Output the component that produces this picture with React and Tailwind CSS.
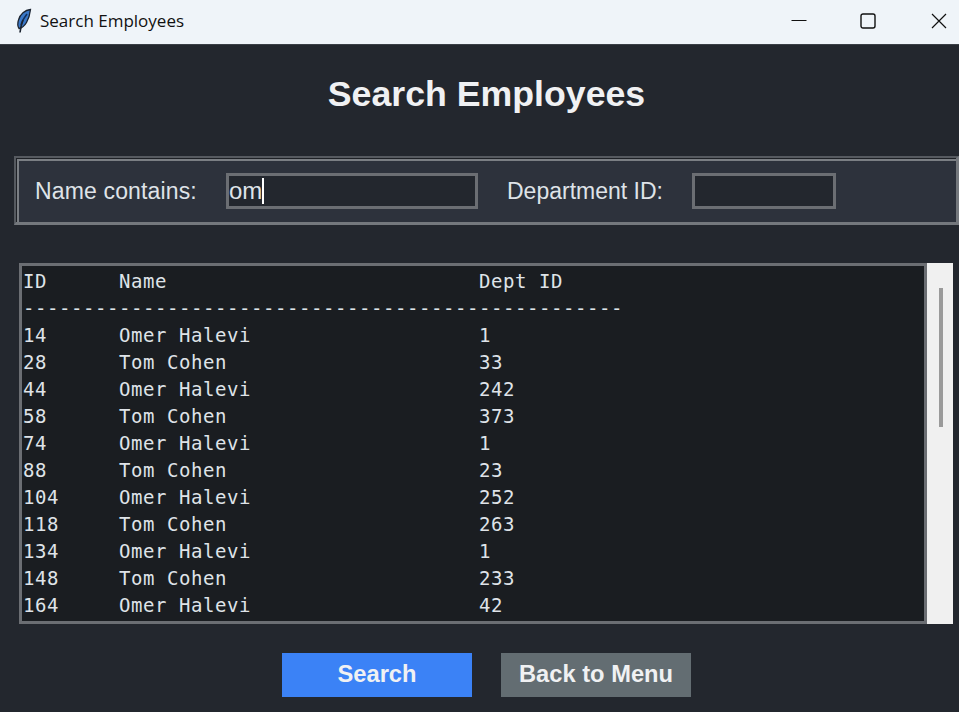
const rows = [
  ['14', 'Omer Halevi', '1'],
  ['28', 'Tom Cohen', '33'],
  ['44', 'Omer Halevi', '242'],
  ['58', 'Tom Cohen', '373'],
  ['74', 'Omer Halevi', '1'],
  ['88', 'Tom Cohen', '23'],
  ['104', 'Omer Halevi', '252'],
  ['118', 'Tom Cohen', '263'],
  ['134', 'Omer Halevi', '1'],
  ['148', 'Tom Cohen', '233'],
  ['164', 'Omer Halevi', '42'],
];

function Feather() {
  return (
    <svg width="18" height="26" viewBox="0 0 18 26" fill="none">
      <path d="M15.5 1.5 C10 2 5 6 3.5 12 C2.5 15 2.5 18 4 20.5 C7 20 9.5 18 11.5 14.5 C13.5 11 15 6 15.5 1.5Z" fill="#3a78c8" stroke="#1c2430" strokeWidth="1.3" />
      <path d="M12 6 C9 10 7 13 6 17" stroke="#12305c" strokeWidth="1.6" />
      <path d="M8 12 C6.5 16 5.5 20 5 24.5" stroke="#1c2430" strokeWidth="1.6" />
    </svg>
  );
}

function Row({ id, name, dept }) {
  return (
    <div className="flex h-[27px] shrink-0 items-center whitespace-pre">
      <span className="w-[96px]">{id}</span>
      <span className="w-[360px]">{name}</span>
      <span>{dept}</span>
    </div>
  );
}

export default function App() {
  return (
    <div className="flex h-[712px] w-[959px] flex-col overflow-hidden bg-[#23272e] font-['Liberation_Sans',sans-serif]">
      <div className="flex h-[45px] shrink-0 items-center border-b border-[#3a3f46] bg-[#eff4f9] pb-[2px] pl-[15px] font-['Open_Sans',sans-serif] text-[17px] text-[#111]">
        <Feather />
        <span className="ml-[7px]">Search Employees</span>
        <div className="ml-auto flex items-center">
          <svg width="16" height="16" viewBox="0 0 16 16" className="mr-[53px]"><path d="M0.5 7.5H15.5" stroke="#111" strokeWidth="1" /></svg>
          <svg width="16" height="16" viewBox="0 0 16 16" className="mr-[55px]"><rect x="1" y="1" width="14" height="14" rx="2" fill="none" stroke="#111" strokeWidth="1.4" /></svg>
          <svg width="16" height="16" viewBox="0 0 16 16" className="mr-[12px]"><path d="M1 1L15 15M15 1L1 15" stroke="#111" strokeWidth="1.2" /></svg>
        </div>
      </div>

      <div className="flex flex-1 flex-col pl-[14px]">
        <h1 className="mt-[29px] text-center text-[35.7px] leading-[40px] font-bold text-[#f0f1f3]">Search Employees</h1>

        <div className="mt-[42px] h-[69px] border-t-2 border-r-[3px] border-b-[3px] border-l-2 border-t-[#565a60] border-r-[#74787d] border-b-[#74787d] border-l-[#565a60] bg-[#1e2126]">
          <div className="mt-px ml-px flex h-[63px] items-center border-t-2 border-l-2 border-t-[#7b7f84] border-l-[#7b7f84] bg-[#2d323c] pb-[1px] pl-[16px] text-[23px] text-[#dfe3e8]">
            <span className="w-[191px] tracking-[0.15px]">Name contains:</span>
            <div className="flex h-[36px] w-[252px] items-center border-[3px] border-[#6b6e73] bg-[#23272e] text-[24px]">
              <span>om</span>
              <span className="h-[26px] w-[2px] bg-white" />
            </div>
            <span className="ml-[29px] w-[185px]">Department ID:</span>
            <div className="h-[36px] w-[144px] border-[3px] border-[#6b6e73] bg-[#23272e]" />
          </div>
        </div>

        <div className="mt-[38px] flex h-[361px] items-stretch pl-[5px]">
          <div className="flex flex-1 flex-col overflow-hidden border-[3px] border-[#6b6e73] bg-[#1a1d21] pt-[2px] pl-[1px] font-['DejaVu_Sans_Mono',monospace] text-[19px] tracking-[0.56px] text-[#dfe3e8]">
            <Row id="ID" name="Name" dept="Dept ID" />
            <div className="flex h-[27px] shrink-0 items-center whitespace-pre">{'-'.repeat(50)}</div>
            {rows.map(([id, name, dept]) => (
              <Row key={id} id={id} name={name} dept={dept} />
            ))}
          </div>
          <div className="flex w-[26px] justify-center bg-[#f0f0f0] pt-[25px] pl-[1px]">
            <div className="h-[139px] w-[4px] bg-[#9a9a9a]" />
          </div>
          <div className="w-[6px]" />
        </div>

        <div className="mt-[29px] flex justify-center gap-[29px] text-[23.7px] font-bold text-[#f0f1f3]">
          <button className="flex h-[44px] w-[190px] items-center justify-center bg-[#3b82f6]">Search</button>
          <button className="flex h-[44px] w-[190px] items-center justify-center bg-[#636d72]">Back to Menu</button>
        </div>
      </div>
    </div>
  );
}
